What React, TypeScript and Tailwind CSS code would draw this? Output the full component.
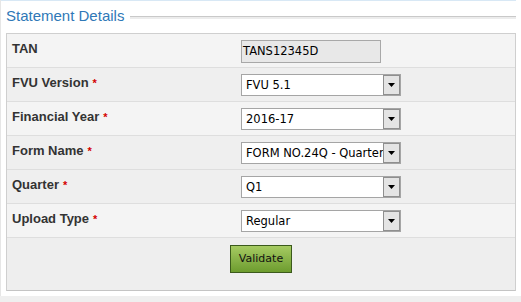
const rows = [
  { label: "TAN", required: false, value: "TANS12345D", kind: "text", bg: "bg-[#f4f4f4]" },
  { label: "FVU Version", required: true, value: "FVU 5.1", kind: "select", bg: "bg-[#efefef]" },
  { label: "Financial Year", required: true, value: "2016-17", kind: "select", bg: "bg-[#f4f4f4]" },
  { label: "Form Name", required: true, value: "FORM NO.24Q - Quarterly", kind: "select", bg: "bg-[#efefef]" },
  { label: "Quarter", required: true, value: "Q1", kind: "select", bg: "bg-[#efefef]" },
  { label: "Upload Type", required: true, value: "Regular", kind: "select", bg: "bg-[#f4f4f4]" },
];

function FakeSelect({ value }: { value: string }) {
  return (
    <div className="flex h-[22px] w-[160px] overflow-hidden border border-[#a5a5a5] bg-white">
      <div className="flex-1 overflow-hidden whitespace-nowrap pl-[4px] text-[11.5px] leading-[20px] text-black [font-family:'DejaVu_Sans',sans-serif]">
        {value}
      </div>
      <div className="flex w-[17px] shrink-0 items-center justify-center border border-[#8f8f8f] bg-[#e4e4e4]">
        <svg width="7" height="4" viewBox="0 0 7 4">
          <path d="M0 0H7L3.5 4Z" fill="#000" />
        </svg>
      </div>
    </div>
  );
}

export default function App() {
  return (
    <div className="h-[302px] w-[521px] bg-[#efefef] [font-family:'Liberation_Sans',Arial,sans-serif]">
      <div className="h-[296px] border-l border-[#e6e6e6] bg-white">
        <div className="h-px w-[515px] bg-[#d8e8f5]" />

        {/* Legend */}
        <div className="mt-[6px] flex h-[18px] w-[515px] items-center">
          <span className="pl-[5px] text-[15px] leading-[18px] text-[#2f78b7]">Statement Details</span>
          <div className="ml-[6px] mt-[2px] h-[3px] flex-1 border-t border-[#c9c9c9] bg-[#ececec]" />
        </div>

        {/* Form table */}
        <div className="ml-[5px] mt-[8px] w-[510px] border border-[#cfcfcf] border-b-[#c4c4c4]">
          {rows.map((r) => (
            <div key={r.label} className={`flex h-[34px] border-b border-[#dedede] ${r.bg}`}>
              <div className="w-[234px] pl-[5px] pt-[7px] text-[13px] font-bold leading-[16px] text-[#333]">
                {r.label}
                {r.required && <span className="ml-[4px] text-[11px] text-[#d40000]">*</span>}
              </div>
              <div className="pt-[6px]">
                {r.kind === "text" ? (
                  <div className="h-[23px] w-[140px] border border-[#a8a8a8] bg-[#e8e8e8] pl-[1px] text-[11.5px] leading-[21px] text-black [font-family:'DejaVu_Sans',sans-serif]">
                    {r.value}
                  </div>
                ) : (
                  <FakeSelect value={r.value} />
                )}
              </div>
            </div>
          ))}
          <div className="flex h-[52px] justify-center bg-[#eeeeee] pt-[7px]">
            <button className="h-[28px] w-[62px] border border-[#3b5a1c] bg-gradient-to-b from-[#a6cb62] to-[#6d9c2e] text-[11px] text-[#111] [font-family:'DejaVu_Sans',sans-serif]">
              Validate
            </button>
          </div>
        </div>
      </div>
    </div>
  );
}
